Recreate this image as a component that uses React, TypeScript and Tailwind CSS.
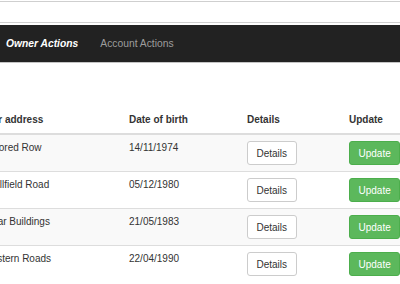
const rows = [
  { address: "31 Moored Row", dob: "14/11/1974" },
  { address: "45 Wellfield Road", dob: "05/12/1980" },
  { address: "9 Cedar Buildings", dob: "21/05/1983" },
  { address: "72 Eastern Roads", dob: "22/04/1990" },
];

export default function App() {
  return (
    <div className="h-[284px] w-[400px] overflow-hidden bg-white font-['Liberation_Sans',Arial,sans-serif] text-[10px] text-[#333]">
      {/* search strip */}
      <div className="mt-px h-[22px] border-y border-[#cfcfcf] bg-white" />

      {/* navbar */}
      <nav className="mt-[2px] flex h-[38px] items-center gap-[22px] border-b border-[#c4c4c4] bg-[#222] pl-[6px] text-[10.3px]">
        <span className="font-bold italic text-white">Owner Actions</span>
        <span className="text-[#9d9d9d]">Account Actions</span>
      </nav>

      {/* owners table */}
      <div className="-ml-[35px] mt-[44px] w-[470px]">
        <div className="grid grid-cols-[158px_118px_102px_1fr] border-b-2 border-[#ddd] font-bold">
          <div className="px-[6px] py-[6px] leading-[14px]">Owner address</div>
          <div className="px-[6px] py-[6px] leading-[14px]">Date of birth</div>
          <div className="px-[6px] py-[6px] leading-[14px]">Details</div>
          <div className="px-[6px] py-[6px] leading-[14px]">Update</div>
        </div>
        {rows.map((r, i) => (
          <div
            key={r.dob}
            className={
              "grid grid-cols-[158px_118px_102px_1fr] " +
              (i > 0 ? "border-t border-[#ddd] " : "") +
              (i % 2 === 0 ? "bg-[#f9f9f9]" : "bg-white")
            }
          >
            <div className="px-[6px] pt-[6px] leading-[14px]">{r.address}</div>
            <div className="px-[6px] pt-[6px] leading-[14px]">{r.dob}</div>
            <div className="px-[6px] py-[6px]">
              <button className="h-[24px] rounded-[3px] border border-[#ccc] bg-white px-[8.5px] text-[#333]">
                Details
              </button>
            </div>
            <div className="px-[6px] py-[6px]">
              <button className="h-[24px] rounded-[3px] border border-[#4cae4c] bg-[#5cb85c] px-[8.5px] text-white">
                Update
              </button>
            </div>
          </div>
        ))}
      </div>
    </div>
  );
}
